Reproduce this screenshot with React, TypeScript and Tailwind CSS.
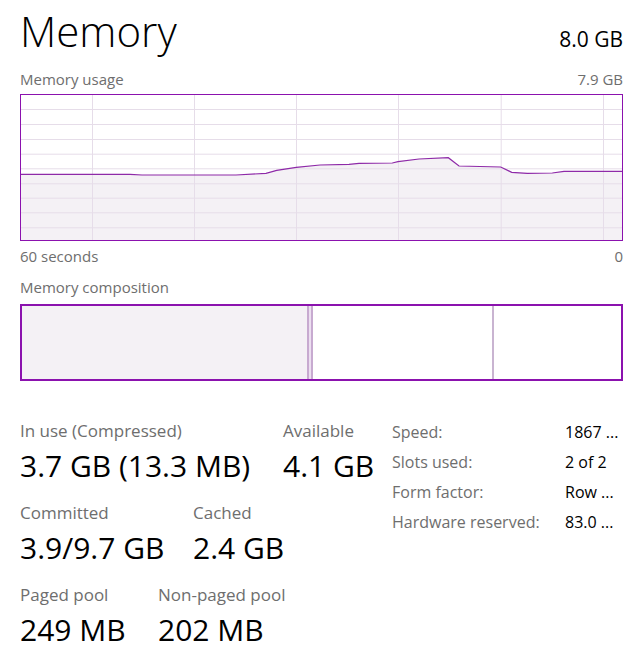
import React from "react";

const pts: [number, number][] = [
  [0, 80.3], [110, 80.3], [122, 81], [216, 81], [246, 79.3], [256.7, 76.3], [276.3, 73.3],
  [300, 71], [329, 70.3], [339, 69.3], [372.3, 69], [378, 67.7], [399, 65], [428.3, 63.7],
  [439, 72], [480.7, 73], [491.7, 78.3], [507.3, 79.3], [532.3, 79], [544, 77.3], [603, 77.3],
];

function UsageChart() {
  const W = 603;
  const H = 147;
  const line = pts.map((p) => `${p[0]},${p[1]}`).join(" ");
  const area = `0,${H} ${line} ${W},${H}`;
  const hLines = [15, 30, 45, 59.7, 74.3, 89.3, 103.7, 118.3, 133.3];
  const vLines = [72, 174, 276, 378, 480.7, 583];
  return (
    <svg width={W} height={H} viewBox={`0 0 ${W} ${H}`} className="block">
      <rect x="0" y="0" width={W} height={H} fill="#ffffff" />
      <polygon points={area} fill="#f4f1f5" />
      {hLines.map((y) => (
        <line key={`h${y}`} x1="0" x2={W} y1={y + 0.5} y2={y + 0.5} stroke="#e6dde9" strokeWidth="1" />
      ))}
      {vLines.map((x) => (
        <line key={`v${x}`} x1={x + 0.5} x2={x + 0.5} y1="0" y2={H} stroke="#e6dde9" strokeWidth="1" />
      ))}
      <polyline points={line} fill="none" stroke="#8e2aa8" strokeWidth="1.2" />
      <rect x="0.5" y="0.5" width={W - 1} height={H - 1} fill="none" stroke="#8b12ae" strokeWidth="1" />
    </svg>
  );
}

function Stat({ label, value, className = "" }: { label: string; value: string; className?: string }) {
  return (
    <div className={`flex flex-col gap-[5px] ${className}`}>
      <div className="text-[17px] leading-[24px] text-[#6e6e6e] whitespace-nowrap">{label}</div>
      <div className="text-[30px] leading-[36px] text-black whitespace-nowrap">{value}</div>
    </div>
  );
}

export default function App() {
  return (
    <div
      className="w-[639px] h-[667px] bg-white overflow-hidden pl-[20px] pr-[16px]"
      style={{ fontFamily: '"Open Sans", "Noto Sans", sans-serif' }}
    >
      <div className="flex justify-between items-baseline mt-[7px] h-[48px]">
        <span className="text-[42px] leading-[48px] font-light text-black">Memory</span>
        <span className="text-[21px] leading-[28px] text-black">8.0 GB</span>
      </div>

      <div className="flex justify-between mt-[14px] h-[20px] text-[15px] leading-[20px] text-[#6e6e6e]">
        <span>Memory usage</span>
        <span>7.9 GB</span>
      </div>

      <div className="mt-[5px]">
        <UsageChart />
      </div>

      <div className="flex justify-between mt-[5px] h-[20px] text-[15px] leading-[20px] text-[#6e6e6e]">
        <span>60 seconds</span>
        <span>0</span>
      </div>

      <div className="mt-[11px] h-[20px] text-[15px] leading-[20px] text-[#6e6e6e]">Memory composition</div>

      <div className="mt-[7px] h-[77px] border-2 border-[#8b12ae] flex">
        <div className="w-[285px] bg-[#f4f1f5]" />
        <div className="w-[2px] bg-[#c7aad0]" />
        <div className="w-[2px] bg-[#ecdff0]" />
        <div className="w-[2px] bg-[#c7aad0]" />
        <div className="w-[179px] bg-white" />
        <div className="w-[2px] bg-[#c9b4d1]" />
        <div className="flex-1 bg-white" />
      </div>

      <div className="flex items-start mt-[34px]">
        <div className="w-[372px] pt-[4px] flex flex-col gap-[17px]">
          <div className="flex">
            <Stat className="w-[263px]" label="In use (Compressed)" value="3.7 GB (13.3 MB)" />
            <Stat label="Available" value="4.1 GB" />
          </div>
          <div className="flex">
            <Stat className="w-[173px]" label="Committed" value="3.9/9.7 GB" />
            <Stat label="Cached" value="2.4 GB" />
          </div>
          <div className="flex">
            <Stat className="w-[138px]" label="Paged pool" value="249 MB" />
            <Stat label="Non-paged pool" value="202 MB" />
          </div>
        </div>
        <div className="grid grid-cols-[173px_1fr] auto-rows-[30px] content-start pt-[2px] text-[16px] leading-[30px]">
          <span className="text-[#6e6e6e] whitespace-nowrap">Speed:</span>
          <span className="text-black whitespace-nowrap">1867 ...</span>
          <span className="text-[#6e6e6e] whitespace-nowrap">Slots used:</span>
          <span className="text-black whitespace-nowrap">2 of 2</span>
          <span className="text-[#6e6e6e] whitespace-nowrap">Form factor:</span>
          <span className="text-black whitespace-nowrap">Row ...</span>
          <span className="text-[#6e6e6e] whitespace-nowrap">Hardware reserved:</span>
          <span className="text-black whitespace-nowrap">83.0 ...</span>
        </div>
      </div>
    </div>
  );
}
